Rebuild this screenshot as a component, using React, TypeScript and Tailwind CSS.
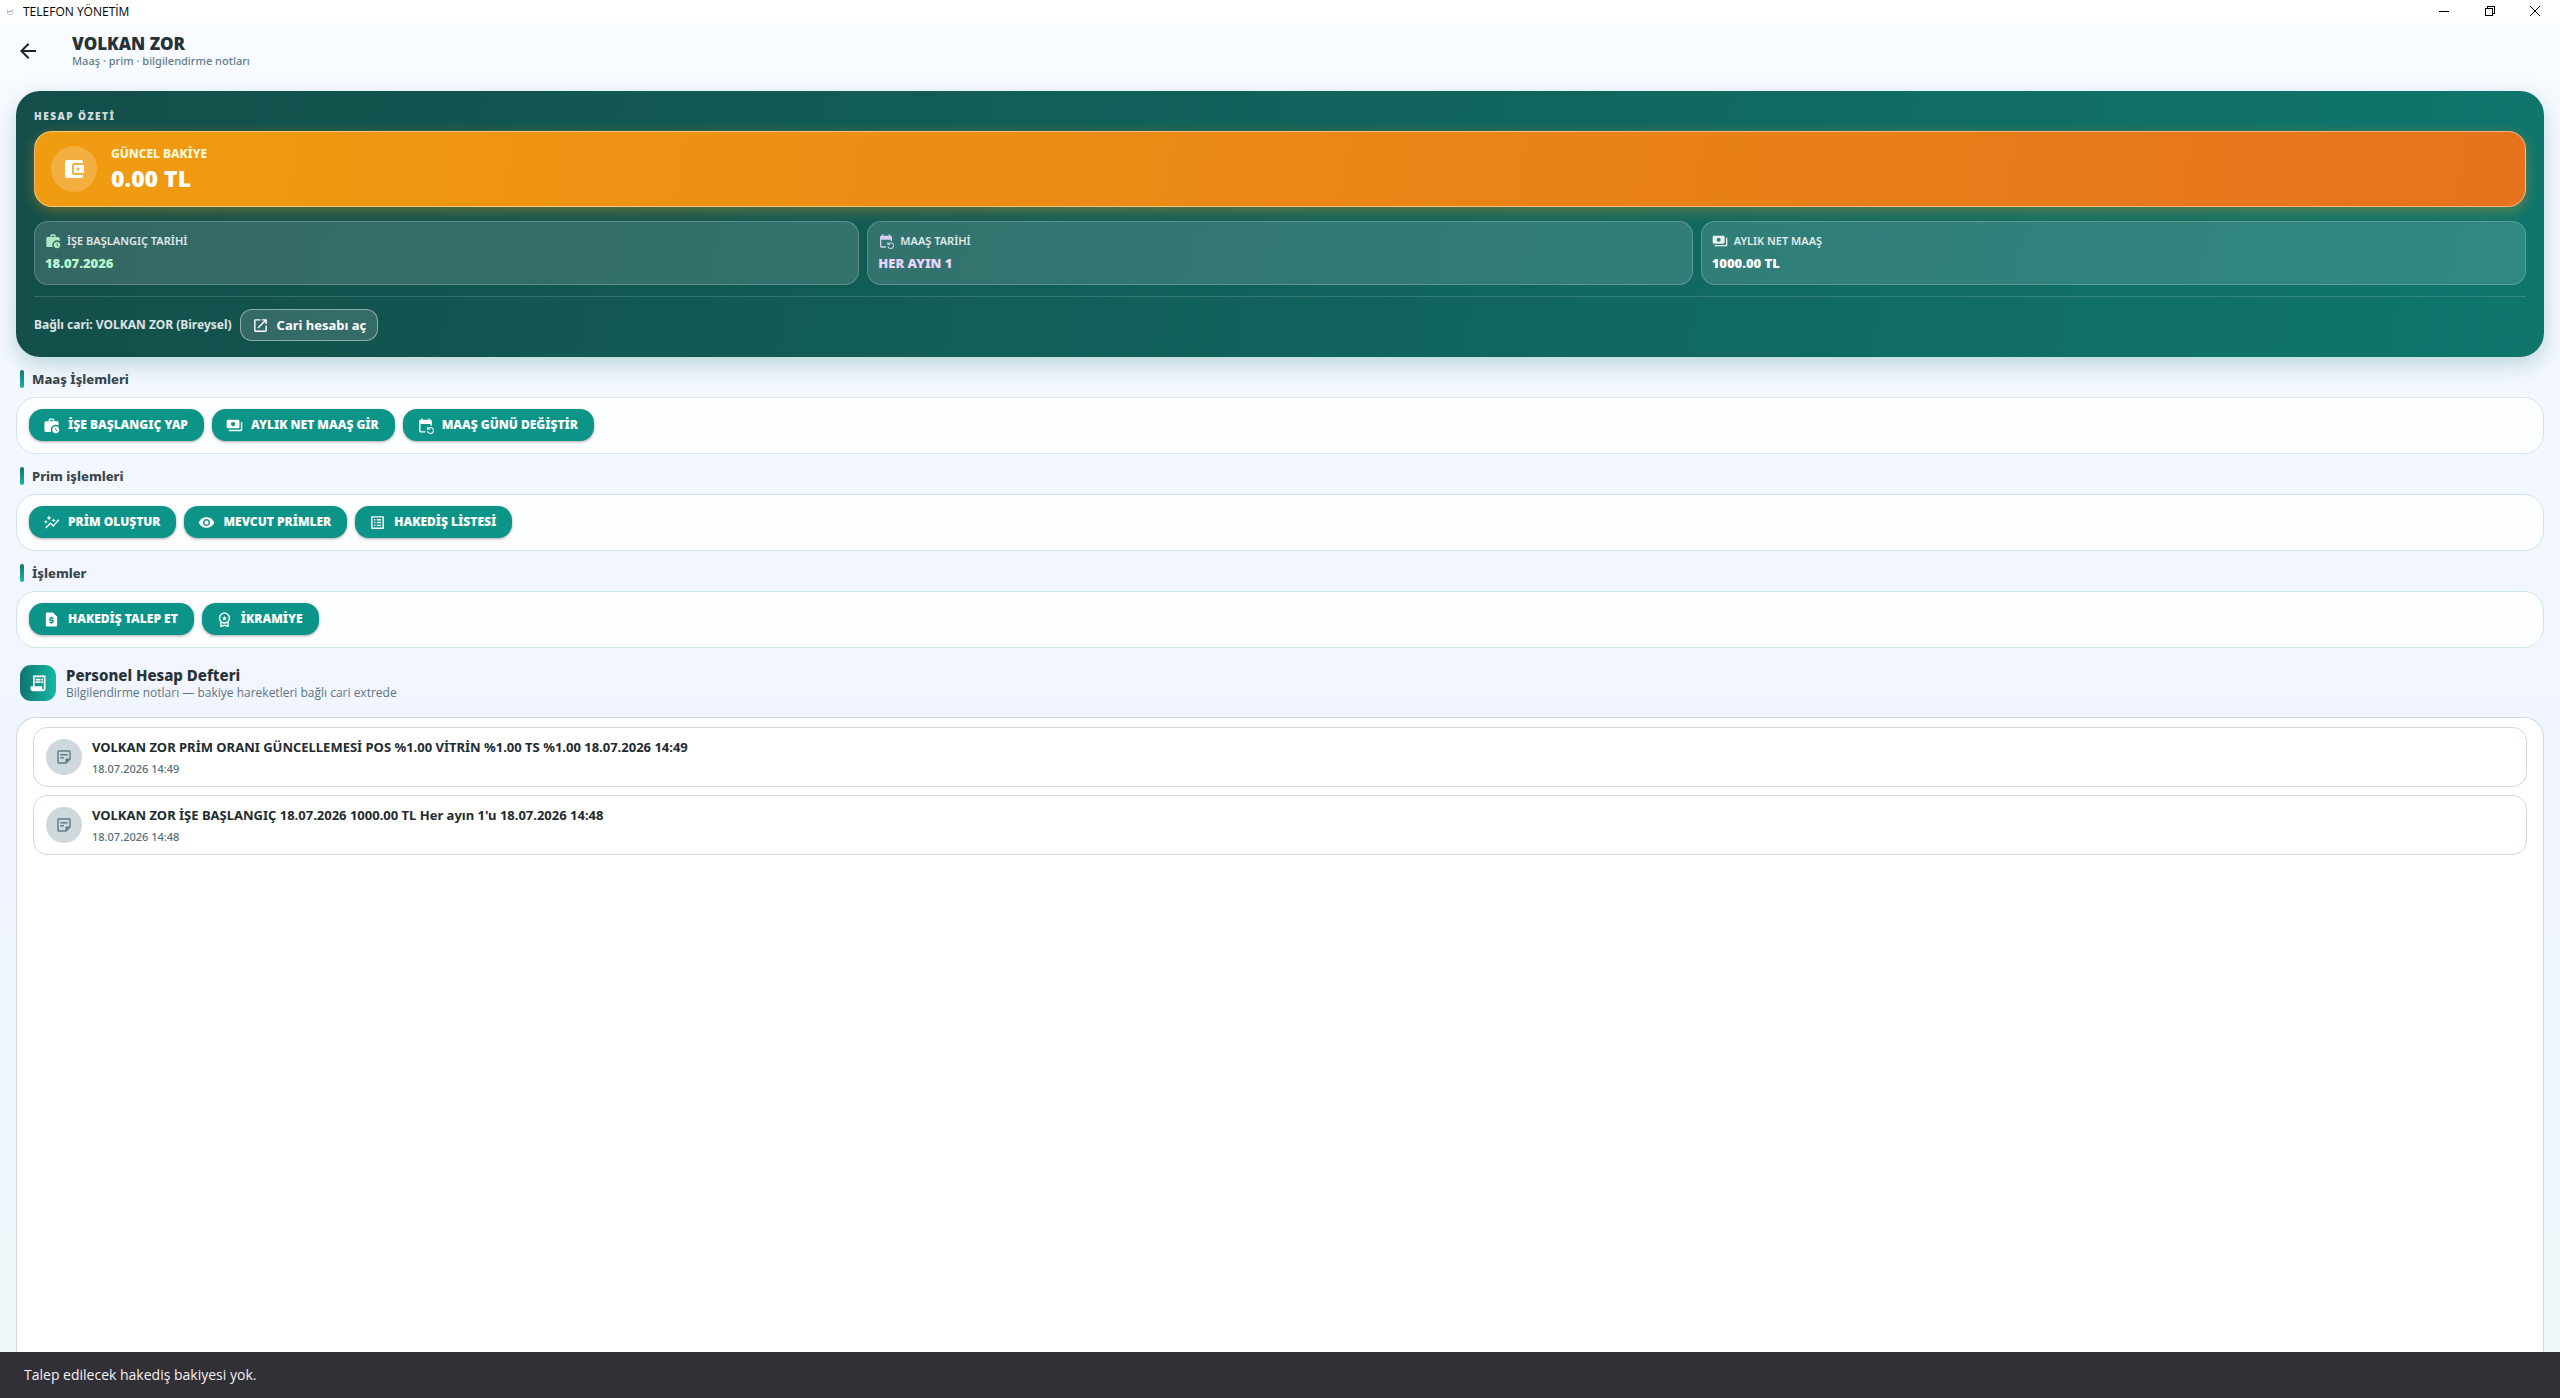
import type { ReactNode } from "react";
import type { IconType } from "react-icons";
import {
  MdAccountBalanceWallet,
  MdArrowBack,
  MdAutoGraph,
  MdEventRepeat,
  MdListAlt,
  MdOpenInNew,
  MdOutlineStickyNote2,
  MdOutlineWorkspacePremium,
  MdPayments,
  MdReceiptLong,
  MdRequestPage,
  MdVisibility,
  MdWorkHistory,
} from "react-icons/md";

type Action = { label: string; icon: IconType };

const sections: { title: string; actions: Action[] }[] = [
  {
    title: "Maaş İşlemleri",
    actions: [
      { label: "İŞE BAŞLANGIÇ YAP", icon: MdWorkHistory },
      { label: "AYLIK NET MAAŞ GİR", icon: MdPayments },
      { label: "MAAŞ GÜNÜ DEĞİŞTİR", icon: MdEventRepeat },
    ],
  },
  {
    title: "Prim işlemleri",
    actions: [
      { label: "PRİM OLUŞTUR", icon: MdAutoGraph },
      { label: "MEVCUT PRİMLER", icon: MdVisibility },
      { label: "HAKEDİŞ LİSTESİ", icon: MdListAlt },
    ],
  },
  {
    title: "İşlemler",
    actions: [
      { label: "HAKEDİŞ TALEP ET", icon: MdRequestPage },
      { label: "İKRAMİYE", icon: MdOutlineWorkspacePremium },
    ],
  },
];

const notes = [
  {
    text: "VOLKAN ZOR PRİM ORANI GÜNCELLEMESİ POS %1.00 VİTRİN %1.00 TS %1.00 18.07.2026 14:49",
    date: "18.07.2026 14:49",
  },
  {
    text: "VOLKAN ZOR İŞE BAŞLANGIÇ 18.07.2026 1000.00 TL Her ayın 1'u 18.07.2026 14:48",
    date: "18.07.2026 14:48",
  },
];

function TitleBar() {
  return (
    <div className="flex h-[23px] shrink-0 items-center bg-white pr-0.5 font-['Open_Sans',sans-serif] text-black">
      <svg className="ml-[7px] size-[6px]" viewBox="0 0 6 6" fill="none">
        <path d="M0.5 0v5M5.5 0v5M1 5.5h4" stroke="#c3cbe0" />
        <path d="M1 3.5l1.500-1.500 1 1 1-1.500" stroke="#6f83b5" />
      </svg>
      <span className="ml-[10px] flex-1 text-[12px] leading-4">TELEFON YÖNETİM</span>
      <div className="flex h-[21px] items-center self-start">
        <button type="button" aria-label="Simge durumuna küçült" className="flex h-full w-[46px] items-center justify-center">
          <svg width="10" height="10" viewBox="0 0 10 10" shapeRendering="crispEdges">
            <path d="M0 5h10v1H0z" />
          </svg>
        </button>
        <button type="button" aria-label="Önceki boyuta getir" className="flex h-full w-[45px] items-center justify-center">
          <svg width="10" height="10" viewBox="0 0 10 10" fill="none" stroke="black" shapeRendering="crispEdges">
            <path d="M0.500 2.500h7v7h-7zM2.500 2.500v-2h7v7h-2" />
          </svg>
        </button>
        <button type="button" aria-label="Kapat" className="flex h-full w-[46px] items-center justify-center">
          <svg width="10" height="10" viewBox="0 0 10 10" fill="none" stroke="black">
            <path d="M0 0l10 10M10 0L0 10" />
          </svg>
        </button>
      </div>
    </div>
  );
}

function Header() {
  return (
    <header className="flex h-14 shrink-0 items-center pl-4">
      <button type="button" aria-label="Geri" className="flex size-6 items-center justify-center text-[#1d2529]">
        <MdArrowBack size={24} />
      </button>
      <div className="ml-8">
        <h1 className="text-[17px] leading-5 font-black text-[#263238]">VOLKAN ZOR</h1>
        <p className="text-[11px] leading-[14px] font-medium text-[#607d8b]">Maaş · prim · bilgilendirme notları</p>
      </div>
    </header>
  );
}

function Stat({ icon: Icon, label, value, tone }: { icon: IconType; label: string; value: string; tone: string }) {
  return (
    <div className="flex h-16 flex-1 flex-col justify-center gap-1 rounded-[14px] border border-white/20 bg-white/14 px-[10px]">
      <div className={`flex items-center gap-1.5 ${tone}`}>
        <Icon size={16} className="opacity-90" />
        <span className="text-[11px] leading-4 font-semibold text-white/85">{label}</span>
      </div>
      <div className={`text-[13px] leading-5 font-black ${tone}`}>{value}</div>
    </div>
  );
}

function Summary() {
  return (
    <section className="shrink-0 rounded-[24px] bg-linear-[100deg] from-[#134e4a] to-[#0f766e] px-[18px] pt-4 pb-4 shadow-[0_8px_22px_rgba(15,118,110,0.25)]">
      <h2 className="text-[10px] leading-[18px] font-black tracking-[1.5px] text-white/80">HESAP ÖZETİ</h2>
      <div className="mt-1.5 flex h-[76px] items-center rounded-[18px] border border-white/45 bg-linear-[100deg] from-[#f09c10] to-[#e5731c] pl-4 shadow-[0_4px_14px_rgba(245,158,11,0.35)]">
        <div className="flex size-[46px] items-center justify-center rounded-full bg-white/20 text-white">
          <MdAccountBalanceWallet size={24} />
        </div>
        <div className="ml-[14px] text-white">
          <div className="text-[12px] leading-4 font-extrabold text-[#fff8dc]">GÜNCEL BAKİYE</div>
          <div className="mt-0.5 text-[23px] leading-7 font-black">0.00 TL</div>
        </div>
      </div>
      <div className="mt-[14px] flex gap-2">
        <Stat icon={MdWorkHistory} label="İŞE BAŞLANGIÇ TARİHİ" value="18.07.2026" tone="text-[#bbf7d0]" />
        <Stat icon={MdEventRepeat} label="MAAŞ TARİHİ" value="HER AYIN 1" tone="text-[#e9d5ff]" />
        <Stat icon={MdPayments} label="AYLIK NET MAAŞ" value="1000.00 TL" tone="text-white" />
      </div>
      <div className="mt-[11px] flex items-center gap-2 border-t border-white/15 pt-3">
        <span className="text-[12px] leading-5 font-bold text-white/85">Bağlı cari: VOLKAN ZOR (Bireysel)</span>
        <button type="button" className="flex h-8 items-center gap-2 rounded-[12px] border border-white/45 bg-white/14 px-[11px] text-[13px] leading-5 font-bold text-white">
          <MdOpenInNew size={17} />
          Cari hesabı aç
        </button>
      </div>
    </section>
  );
}

function ActionSection({ title, children }: { title: string; children: ReactNode }) {
  return (
    <section className="mt-[13px] shrink-0">
      <h2 className="ml-1 flex h-[18px] items-center gap-2 text-[13px] leading-[18px] font-extrabold text-[#37474f]">
        <span className="h-[18px] w-1 rounded-full bg-linear-to-b from-[#0f766e] to-[#14b8a6]" />
        {title}
      </h2>
      <div className="mt-[9px] flex gap-2 rounded-[20px] border border-[#cfe6e8] bg-white/85 px-3 pt-[11px] pb-3">{children}</div>
    </section>
  );
}

function ActionButton({ icon: Icon, label }: Action) {
  return (
    <button
      type="button"
      className="flex h-8 items-center gap-2 rounded-[14px] bg-[#0d9488] pr-4 pl-[14px] text-[12px] leading-5 font-black text-white shadow-[0_1px_3px_rgba(0,0,0,0.35)]"
    >
      <Icon size={17} />
      {label}
    </button>
  );
}

function Ledger() {
  return (
    <>
      <div className="mt-[17px] ml-1 flex shrink-0 items-center gap-[10px]">
        <div className="flex size-9 items-center justify-center rounded-[11px] bg-linear-to-r from-[#0f766e] to-[#14b8a6] text-white">
          <MdReceiptLong size={20} />
        </div>
        <div>
          <h2 className="text-[15px] leading-5 font-extrabold text-[#263238]">Personel Hesap Defteri</h2>
          <p className="font-['Open_Sans',sans-serif] text-[12px] leading-4 text-[#5b7682]">Bilgilendirme notları — bakiye hareketleri bağlı cari extrede</p>
        </div>
      </div>
      <ul className="mt-4 flex flex-1 flex-col gap-2 rounded-t-[20px] border border-b-0 border-[#d0dadf] bg-white px-4 pt-[9px]">
        {notes.map((note) => (
          <li key={note.date} className="flex h-[60px] items-center gap-[10px] rounded-[14px] border border-[#cfd8dc] px-3">
            <div className="flex size-9 items-center justify-center rounded-full bg-[#cfd8dc] text-[#607d8b]">
              <MdOutlineStickyNote2 size={18} />
            </div>
            <div>
              <div className="text-[13px] leading-5 font-bold text-[#212b30]">{note.text}</div>
              <div className="mt-1 text-[11px] leading-4 font-medium text-[#546e7a]">{note.date}</div>
            </div>
          </li>
        ))}
      </ul>
    </>
  );
}

export default function App() {
  return (
    <div className="flex h-screen flex-col overflow-hidden bg-linear-to-b from-[#f8fbff] via-[#f0f4ff] via-60% to-[#ecf8f8] font-['Noto_Sans',sans-serif]">
      <TitleBar />
      <Header />
      <main className="flex flex-1 flex-col px-4 pt-3">
        <Summary />
        {sections.map((section) => (
          <ActionSection key={section.title} title={section.title}>
            {section.actions.map((action) => (
              <ActionButton key={action.label} {...action} />
            ))}
          </ActionSection>
        ))}
        <Ledger />
      </main>
      <div
        role="status"
        className="flex h-[46px] shrink-0 items-center bg-[#313036] px-6 font-['Open_Sans',sans-serif] text-[14px] leading-5 text-[#f4eff4]"
      >
        Talep edilecek hakediş bakiyesi yok.
      </div>
    </div>
  );
}
